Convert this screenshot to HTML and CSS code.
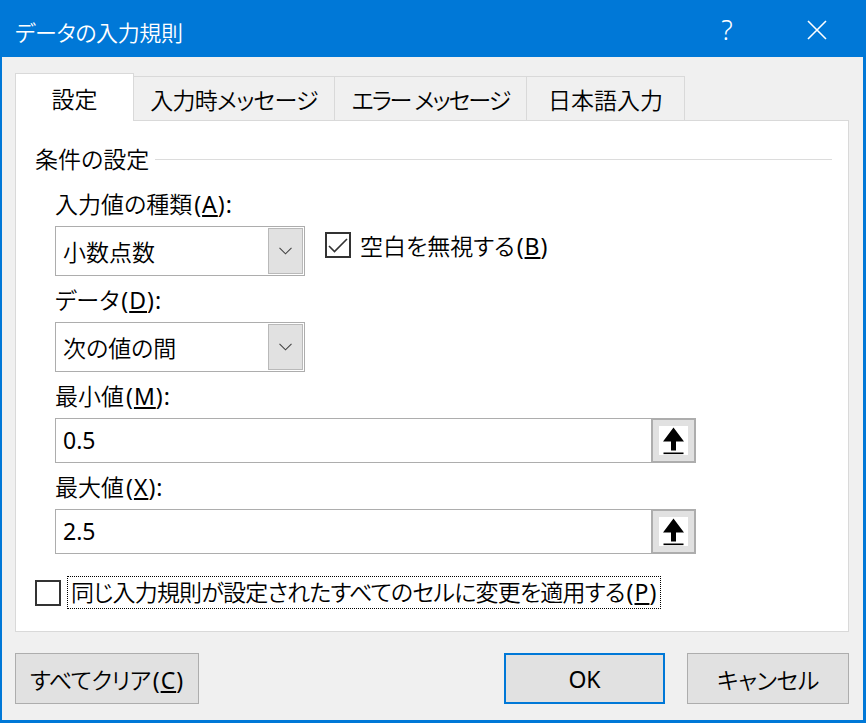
FILE: index.html
```html
<!DOCTYPE html>
<html lang="ja">
<head>
<meta charset="utf-8">
<title>データの入力規則</title>
<link rel="stylesheet" href="styles.css">
</head>
<body>
<div class="window">
  <div class="titlebar">
    <span class="title">データの入力規則</span>
    <span class="cap help">?</span>
    <span class="cap close"><svg width="20" height="20" viewBox="0 0 20 20"><path d="M1 1 L19 19 M19 1 L1 19" stroke="#fff" stroke-width="1.6" fill="none"/></svg></span>
  </div>
  <div class="body">
    <div class="tabs">
      <div class="tab active">設定</div>
      <div class="tab t2">入力時メッセージ</div>
      <div class="tab t3">エラー メッセージ</div>
      <div class="tab t4">日本語入力</div>
      <div class="tab-fill"></div>
    </div>
    <div class="panel">
      <div class="group-head"><span>条件の設定</span><span class="rule"></span></div>
      <div class="fields">
        <div class="label first">入力値の種類<span class="lat">(<u>A</u>):</span></div>
        <div class="row">
          <div class="combo"><span>小数点数</span><span class="drop"><svg width="13" height="8" viewBox="0 0 13 8"><polyline points="0.5,0.8 6.5,6.8 12.5,0.8" fill="none" stroke="#444" stroke-width="1.1"/></svg></span></div>
          <div class="check"><span class="box"><svg width="22" height="22" viewBox="0 0 22 22"><polyline points="2,12 7.5,17.5 20,5" fill="none" stroke="#333" stroke-width="1.6"/></svg></span><span class="check-text">空白を無視する<span class="lat">(<u>B</u>)</span></span></div>
        </div>
        <div class="label">データ<span class="lat">(<u>D</u>):</span></div>
        <div class="combo"><span>次の値の間</span><span class="drop"><svg width="13" height="8" viewBox="0 0 13 8"><polyline points="0.5,0.8 6.5,6.8 12.5,0.8" fill="none" stroke="#444" stroke-width="1.1"/></svg></span></div>
        <div class="label">最小値<span class="lat">(<u>M</u>):</span></div>
        <div class="ref"><span class="val">0.5</span><span class="refbtn"><span class="refimg"><svg width="29" height="29" viewBox="0 0 29 29"><path d="M14.5 1.5 L4 15.5 L12 15.5 L12 24.5 L17 24.5 L17 15.5 L25 15.5 Z" fill="#000"/><rect x="4.5" y="26.5" width="20" height="1.6" fill="#000"/></svg></span></span></div>
        <div class="label">最大値<span class="lat">(<u>X</u>):</span></div>
        <div class="ref"><span class="val">2.5</span><span class="refbtn"><span class="refimg"><svg width="29" height="29" viewBox="0 0 29 29"><path d="M14.5 1.5 L4 15.5 L12 15.5 L12 24.5 L17 24.5 L17 15.5 L25 15.5 Z" fill="#000"/><rect x="4.5" y="26.5" width="20" height="1.6" fill="#000"/></svg></span></span></div>
      </div>
      <div class="apply"><span class="box"></span><span class="focus">同じ入力規則が設定されたすべてのセルに変更を適用する<span class="lat">(<u>P</u>)</span></span></div>
    </div>
    <div class="footer">
      <button class="btn clear">すべてクリア<span class="lat">(<u>C</u>)</span></button>
      <div class="right">
        <button class="btn ok">OK</button>
        <button class="btn cancel">キャンセル</button>
      </div>
    </div>
  </div>
</div>
</body>
</html>
```
FILE: styles.css
```css
* { box-sizing: border-box; }
html, body { margin: 0; padding: 0; }
body {
  font-family: "Noto Sans", "Noto Sans CJK JP", sans-serif;
  font-size: 23px;
  font-weight: 350;
  color: #000;
  background: #f0f0f0;
  font-feature-settings: "palt";
}
.lat {
  letter-spacing: 1px;
  margin-left: 2px;
  font-weight: 400;
}
.window {
  width: 866px;
  height: 723px;
  display: flex;
  flex-direction: column;
}
.titlebar {
  height: 57px;
  flex: none;
  background: #0078d7;
  color: #fff;
  display: flex;
  align-items: center;
  padding: 0 4px 0 15px;
}
.title {
  flex: 1;
  font-size: 22px;
  margin-top: 5px;
  letter-spacing: -0.4px;
}
.cap {
  width: 90px;
  height: 57px;
  display: flex;
  align-items: center;
  justify-content: center;
}
.help {
  font-family: "Noto Sans", sans-serif;
  font-size: 27px;
  font-weight: 300;
  padding-top: 2px;
}
.close { padding-top: 2px; }
.body {
  flex: 1;
  border: solid #0078d7;
  border-width: 0 3px 3px 2px;
  padding: 16px 14px 0 13px;
}
.tabs {
  display: flex;
  align-items: flex-end;
}
.tab {
  height: 45px;
  border: 1px solid #d9d9d9;
  border-left: none;
  background: #f0f0f0;
  display: flex;
  align-items: center;
  justify-content: center;
  white-space: nowrap;
}
.tab.active {
  width: 119px;
  height: 48px;
  border-left: 1px solid #d9d9d9;
  border-bottom: none;
  background: #fff;
}
.t2 { width: 201px; letter-spacing: -0.8px; }
.t3 { width: 192px; letter-spacing: -2px; }
.t4 { width: 158px; }
.tab-fill {
  flex: 1;
  border-bottom: 1px solid #d9d9d9;
}
.panel {
  background: #fff;
  border: 1px solid #d9d9d9;
  border-top: none;
  padding: 22px 16px 22px 19px;
}
.group-head {
  display: flex;
  align-items: center;
  height: 32px;
  line-height: 32px;
}
.rule {
  flex: 1;
  height: 1px;
  background: #dcdcdc;
  margin-left: 6px;
}
.fields { margin-left: 20px; }
.label {
  height: 32px;
  line-height: 32px;
  margin: 8px 0 6px;
}
.label.first { margin-top: 13px; }
.row {
  display: flex;
  align-items: flex-start;
}
.combo {
  width: 250px;
  height: 50px;
  border: 1px solid #adadad;
  background: #fff;
  display: flex;
  align-items: center;
  justify-content: space-between;
  padding: 0 1px 0 7px;
}
.drop {
  width: 35px;
  height: 46px;
  background: #e1e1e1;
  border: 1px solid #b9b9b9;
  display: flex;
  align-items: center;
  justify-content: center;
}
.check {
  display: flex;
  align-items: center;
  height: 32px;
  margin: 3px 0 0 20px;
}
.box {
  width: 26px;
  height: 26px;
  border: 2px solid #333;
  background: #fff;
  display: flex;
  align-items: center;
  justify-content: center;
  flex: none;
}
.check-text { margin-left: 9px; }
.ref {
  display: flex;
  width: 641px;
  height: 45px;
}
.val {
  flex: 1;
  border: 1px solid #adadad;
  border-right: none;
  background: #fff;
  padding-left: 7px;
  line-height: 43px;
  font-weight: 400;
}
.refbtn {
  width: 45px;
  height: 45px;
  border: 2px solid #adadad;
  background: #e1e1e1;
  display: flex;
  align-items: center;
  justify-content: center;
}
.refimg {
  width: 29px;
  height: 29px;
  background: #fff;
  display: block;
}
.refimg svg { display: block; }
.apply {
  display: flex;
  align-items: center;
  height: 33px;
  margin-top: 22px;
}
.focus {
  margin-left: 6px;
  border: 1px dotted #000;
  padding: 0 3px;
  line-height: 31px;
  white-space: nowrap;
  letter-spacing: -0.8px;
}
.focus .lat { letter-spacing: 1px; }
.footer {
  display: flex;
  justify-content: space-between;
  margin-top: 21px;
}
.right { display: flex; }
.btn {
  height: 51px;
  background: #e1e1e1;
  border: 1px solid #adadad;
  font: inherit;
  color: #000;
  padding: 0;
  margin: 0;
}
.clear { width: 184px; letter-spacing: -0.5px; }
.ok {
  width: 161px;
  border: 2px solid #0078d7;
  font-weight: 400;
}
.cancel {
  width: 162px;
  margin-left: 22px;
  letter-spacing: -0.5px;
}
```
